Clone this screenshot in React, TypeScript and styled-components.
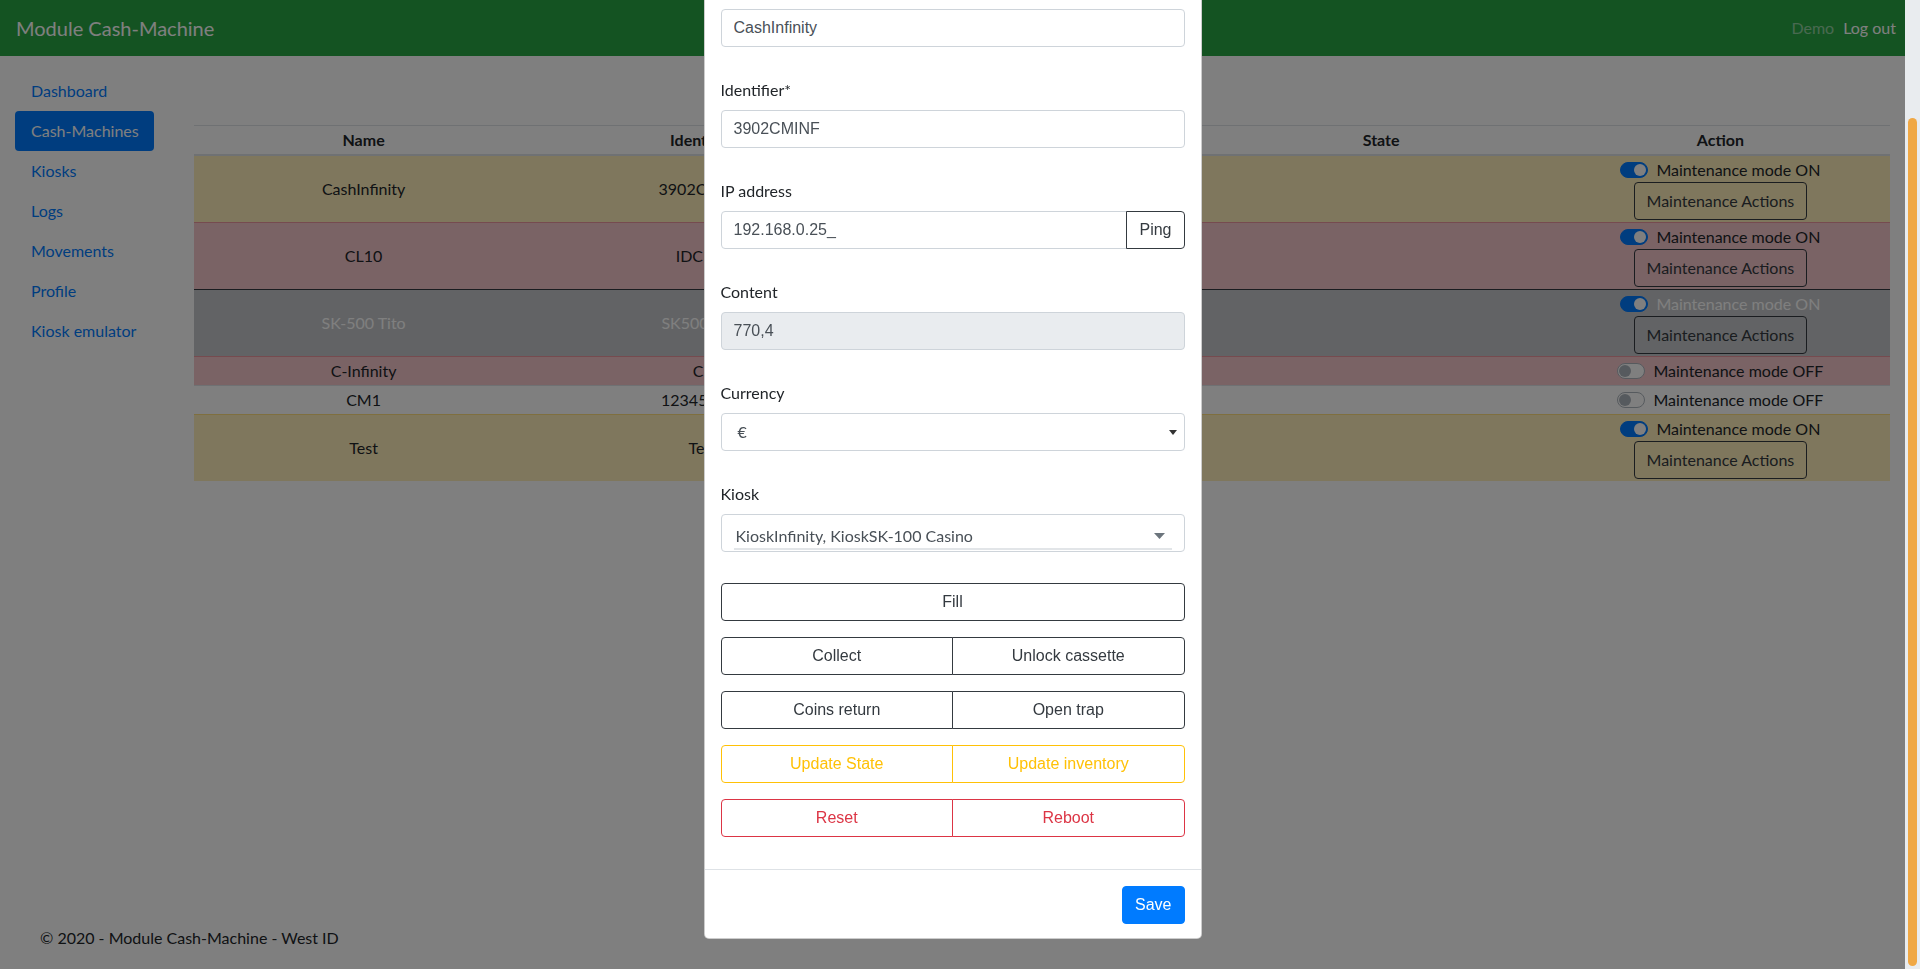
import { useLayoutEffect, useRef, useState } from "react";
import styled, { createGlobalStyle } from "styled-components";

type Tone = "warning" | "danger" | "muted" | "none";
type BtnTone = "dark" | "warning" | "danger";

const tones: Record<Tone, { bg: string; border: string; color: string }> = {
    warning: { bg: "#ffeeba", border: "#ffdf7e", color: "#212529" },
    danger: { bg: "#f5c6cb", border: "#ed969e", color: "#212529" },
    muted: { bg: "#c5c7ca", border: "#343a40", color: "#ffffff" },
    none: { bg: "transparent", border: "#dee2e6", color: "#212529" },
};

const btnColors: Record<BtnTone, string> = {
    dark: "#343a40",
    warning: "#ffc107",
    danger: "#dc3545",
};

const machines = [
    { name: "CashInfinity", id: "3902CMINF", kiosk: "KioskInfinity", tone: "warning" as Tone, on: true },
    { name: "CL10", id: "IDCL10", kiosk: "KioskCL10", tone: "danger" as Tone, on: true },
    { name: "SK-500 Tito", id: "SK500TITO", kiosk: "KioskSK-500", tone: "muted" as Tone, on: true },
    { name: "C-Infinity", id: "C1", kiosk: "", tone: "danger" as Tone, on: false },
    { name: "CM1", id: "123456789", kiosk: "", tone: "none" as Tone, on: false },
    { name: "Test", id: "Test", kiosk: "KioskTest", tone: "warning" as Tone, on: true },
];

const menu = ["Dashboard", "Cash-Machines", "Kiosks", "Logs", "Movements", "Profile", "Kiosk emulator"];

const GlobalStyle = createGlobalStyle`
    * {
        box-sizing: border-box;
    }
    html, body {
        margin: 0;
        height: 100%;
    }
    body {
        overflow: hidden;
        padding-right: 15px;
        font-family: Lato, "Noto Sans", sans-serif;
        font-size: 16px;
        line-height: 1.5;
        color: #212529;
        background: #fff;
    }
`;

export default function App() {
    const layerRef = useRef<HTMLDivElement>(null);
    const [thumb, setThumb] = useState({ top: 118, height: 848 });

    useLayoutEffect(() => {
        const el = layerRef.current;
        if (!el) return;
        el.scrollTop = el.scrollHeight;
        const view = el.clientHeight;
        const total = el.scrollHeight;
        setThumb({
            top: (el.scrollTop / total) * view + 3,
            height: (view / total) * view - 6,
        });
    }, []);

    return (
        <>
            <GlobalStyle />
            <Page>
                <Navbar>
                    <Brand>Module Cash-Machine</Brand>
                    <NavRight>
                        <NavText>Demo</NavText>
                        <NavLink>Log out</NavLink>
                    </NavRight>
                </Navbar>
                <Layout>
                    <SideNav>
                        {menu.map((item) => (
                            <li key={item}>
                                <SideLink $active={item === "Cash-Machines"}>{item}</SideLink>
                            </li>
                        ))}
                    </SideNav>
                    <Main>
                        <Table>
                            <thead>
                                <tr>
                                    <Th>Name</Th>
                                    <Th>Identifier</Th>
                                    <Th>Kiosk</Th>
                                    <Th>State</Th>
                                    <Th>Action</Th>
                                </tr>
                            </thead>
                            <tbody>
                                {machines.map((m) => (
                                    <Row key={m.name} $tone={m.tone}>
                                        <Td $tone={m.tone}>{m.name}</Td>
                                        <Td $tone={m.tone}>{m.id}</Td>
                                        <Td $tone={m.tone}>{m.kiosk}</Td>
                                        <Td $tone={m.tone}></Td>
                                        <Td $tone={m.tone}>
                                            <ActionStack>
                                                <SwitchLabel>
                                                    <SwitchTrack $on={m.on} />
                                                    Maintenance mode {m.on ? "ON" : "OFF"}
                                                </SwitchLabel>
                                                {m.on && <RowButton>Maintenance Actions</RowButton>}
                                            </ActionStack>
                                        </Td>
                                    </Row>
                                ))}
                            </tbody>
                        </Table>
                    </Main>
                </Layout>
                <Footer>© 2020 - Module Cash-Machine - West ID</Footer>
            </Page>

            <ModalLayer ref={layerRef}>
                <Dialog>
                    <ModalHeader>
                        <ModalTitle>Cash-Machine</ModalTitle>
                        <CloseButton>×</CloseButton>
                    </ModalHeader>
                    <ModalBody>
                        <FormGroup>
                            <Label>Name*</Label>
                            <Input defaultValue="CashInfinity" />
                        </FormGroup>
                        <FormGroup>
                            <Label>Identifier*</Label>
                            <Input defaultValue="3902CMINF" />
                        </FormGroup>
                        <FormGroup>
                            <Label>IP address</Label>
                            <InputGroup>
                                <Input defaultValue="192.168.0.25_" $joined />
                                <PingButton>Ping</PingButton>
                            </InputGroup>
                        </FormGroup>
                        <FormGroup>
                            <Label>Content</Label>
                            <Input defaultValue="770,4" disabled />
                        </FormGroup>
                        <FormGroup>
                            <Label>Currency</Label>
                            <SelectBox>
                                <span>€</span>
                                <svg width="8" height="5" viewBox="0 0 8 5">
                                    <path d="M0 0h8L4 5z" fill="#333" />
                                </svg>
                            </SelectBox>
                        </FormGroup>
                        <FormGroup>
                            <Label>Kiosk</Label>
                            <KioskBox>
                                <KioskValue>
                                    <span>KioskInfinity, KioskSK-100 Casino</span>
                                    <svg width="11" height="6" viewBox="0 0 11 6">
                                        <path d="M0 0h11L5.5 6z" fill="#6c757d" />
                                    </svg>
                                </KioskValue>
                            </KioskBox>
                        </FormGroup>

                        <ButtonRow>
                            <OutlineButton $tone="dark">Fill</OutlineButton>
                        </ButtonRow>
                        <ButtonRow>
                            <OutlineButton $tone="dark">Collect</OutlineButton>
                            <OutlineButton $tone="dark">Unlock cassette</OutlineButton>
                        </ButtonRow>
                        <ButtonRow>
                            <OutlineButton $tone="dark">Coins return</OutlineButton>
                            <OutlineButton $tone="dark">Open trap</OutlineButton>
                        </ButtonRow>
                        <ButtonRow>
                            <OutlineButton $tone="warning">Update State</OutlineButton>
                            <OutlineButton $tone="warning">Update inventory</OutlineButton>
                        </ButtonRow>
                        <ButtonRow>
                            <OutlineButton $tone="danger">Reset</OutlineButton>
                            <OutlineButton $tone="danger">Reboot</OutlineButton>
                        </ButtonRow>
                    </ModalBody>
                    <ModalFooter>
                        <SaveButton>Save</SaveButton>
                    </ModalFooter>
                </Dialog>
            </ModalLayer>
            <ScrollTrack>
                <ScrollThumb style={{ top: thumb.top, height: thumb.height }} />
            </ScrollTrack>
        </>
    );
}

const Page = styled.div`
    height: 100vh;
    display: flex;
    flex-direction: column;
`;

const Navbar = styled.nav`
    height: 56px;
    flex-shrink: 0;
    display: flex;
    align-items: center;
    padding: 0 1px 0 16px;
    background: #28a745;
`;

const Brand = styled.span`
    font-size: 20px;
    line-height: 30px;
    color: #fff;
`;

const NavRight = styled.div`
    margin-left: auto;
    display: flex;
    align-items: center;
`;

const NavText = styled.span`
    color: rgba(255, 255, 255, 0.5);
`;

const NavLink = styled.a`
    padding: 0 8px 0 9px;
    color: #fff;
    text-decoration: none;
`;

const Layout = styled.div`
    flex: 1;
    display: grid;
    grid-template-columns: 139px 1fr;
    column-gap: 40px;
    align-items: start;
    padding: 15px 15px 0;
`;

const SideNav = styled.ul`
    list-style: none;
    margin: 0;
    padding: 0;
`;

const SideLink = styled.a<{ $active?: boolean }>`
    display: block;
    padding: 8px 16px;
    border-radius: 4px;
    line-height: 24px;
    white-space: nowrap;
    text-decoration: none;
    color: ${(p) => (p.$active ? "#fff" : "#007bff")};
    background: ${(p) => (p.$active ? "#007bff" : "transparent")};
`;

const Main = styled.main`
    padding-top: 54px;
`;

const Table = styled.table`
    width: 100%;
    border-collapse: collapse;
    table-layout: fixed;
    text-align: center;
`;

const Th = styled.th`
    padding: 2px 4px;
    line-height: 24px;
    font-weight: 700;
    border-top: 1px solid #dee2e6;
    border-bottom: 2px solid #dee2e6;
`;

const Row = styled.tr<{ $tone: Tone }>`
    background: ${(p) => tones[p.$tone].bg};
    color: ${(p) => tones[p.$tone].color};
`;

const Td = styled.td<{ $tone: Tone }>`
    padding: 2px 4px;
    line-height: 24px;
    vertical-align: middle;
    white-space: nowrap;
    border-top: 1px solid ${(p) => tones[p.$tone].border};
`;

const ActionStack = styled.div`
    display: flex;
    flex-direction: column;
    align-items: center;
`;

const SwitchLabel = styled.label`
    display: inline-flex;
    align-items: center;
    gap: 8px;
    line-height: 24px;
`;

const SwitchTrack = styled.span<{ $on: boolean }>`
    position: relative;
    width: 28px;
    height: 16px;
    border-radius: 8px;
    border: 1px solid ${(p) => (p.$on ? "#007bff" : "#adb5bd")};
    background: ${(p) => (p.$on ? "#007bff" : "#fff")};
    &::after {
        content: "";
        position: absolute;
        top: 1px;
        left: ${(p) => (p.$on ? "13px" : "1px")};
        width: 12px;
        height: 12px;
        border-radius: 50%;
        background: ${(p) => (p.$on ? "#fff" : "#adb5bd")};
    }
`;

const RowButton = styled.button`
    height: 38px;
    padding: 6px 12px;
    font-family: inherit;
    font-size: 16px;
    line-height: 24px;
    color: #343a40;
    background: transparent;
    border: 1px solid #343a40;
    border-radius: 4px;
`;

const Footer = styled.footer`
    height: 57px;
    flex-shrink: 0;
    padding-left: 40px;
    line-height: 51px;
    white-space: nowrap;
`;

const ModalLayer = styled.div`
    position: fixed;
    inset: 0;
    z-index: 10;
    overflow: hidden;
    padding-right: 15px;
    background: rgba(0, 0, 0, 0.5);
`;

const ScrollTrack = styled.div`
    position: fixed;
    top: 0;
    right: 0;
    bottom: 0;
    z-index: 11;
    width: 15px;
    background: #e9ecef;
`;

const ScrollThumb = styled.div`
    position: absolute;
    left: 3px;
    right: 3px;
    border-radius: 5px;
    background: #f0a845;
`;

const Dialog = styled.div`
    width: 498px;
    margin: 28px auto 30px;
    background: #fff;
    border: 1px solid rgba(0, 0, 0, 0.2);
    border-radius: 5px;
`;

const ModalHeader = styled.div`
    display: flex;
    align-items: center;
    justify-content: space-between;
    padding: 16px;
    border-bottom: 1px solid #dee2e6;
`;

const ModalTitle = styled.h5`
    margin: 0;
    font-size: 20px;
    font-weight: 500;
    line-height: 30px;
`;

const CloseButton = styled.button`
    border: 0;
    background: transparent;
    font-size: 24px;
    font-weight: 700;
    line-height: 1;
    color: #000;
    opacity: 0.5;
`;

const ModalBody = styled.div`
    padding: 16px;
`;

const FormGroup = styled.div`
    margin-bottom: 31px;
`;

const Label = styled.label`
    display: block;
    margin-bottom: 8px;
    line-height: 24px;
`;

const Input = styled.input<{ $joined?: boolean }>`
    display: block;
    width: 100%;
    height: 38px;
    padding: 6px 12px;
    font-family: "Liberation Sans", Arial, sans-serif;
    font-size: 16px;
    line-height: 24px;
    color: #495057;
    background: #fff;
    border: 1px solid #ced4da;
    border-radius: ${(p) => (p.$joined ? "4px 0 0 4px" : "4px")};
    &:disabled {
        background: #e9ecef;
    }
`;

const InputGroup = styled.div`
    display: flex;
    > input {
        flex: 1;
    }
`;

const PingButton = styled.button`
    height: 38px;
    margin-left: -1px;
    padding: 6px 12px;
    font-family: "Liberation Sans", Arial, sans-serif;
    font-size: 16px;
    line-height: 24px;
    color: #343a40;
    background: #fff;
    border: 1px solid #343a40;
    border-radius: 0 4px 4px 0;
`;

const SelectBox = styled.div`
    display: flex;
    align-items: center;
    justify-content: space-between;
    height: 38px;
    padding: 0 7px 0 16px;
    color: #495057;
    border: 1px solid #ced4da;
    border-radius: 4px;
`;

const KioskBox = styled.div`
    display: flex;
    align-items: flex-end;
    height: 38px;
    padding: 0 12px 1px;
    border: 1px solid #ced4da;
    border-radius: 4px;
`;

const KioskValue = styled.div`
    flex: 1;
    display: flex;
    align-items: center;
    justify-content: space-between;
    height: 26px;
    padding: 0 7px 0 2px;
    color: #495057;
    border-bottom: 2px solid #e2e5e8;
`;

const ButtonRow = styled.div`
    display: flex;
    margin-bottom: 16px;
`;

const OutlineButton = styled.button<{ $tone: BtnTone }>`
    flex: 1;
    height: 38px;
    padding: 6px 12px;
    font-family: "Liberation Sans", Arial, sans-serif;
    font-size: 16px;
    line-height: 24px;
    color: ${(p) => btnColors[p.$tone]};
    background: #fff;
    border: 1px solid ${(p) => btnColors[p.$tone]};
    border-radius: 4px;
    &:first-child:not(:last-child) {
        border-radius: 4px 0 0 4px;
    }
    & + & {
        margin-left: -1px;
        border-radius: 0 4px 4px 0;
    }
`;

const ModalFooter = styled.div`
    display: flex;
    justify-content: flex-end;
    padding: 12px 12px 10px;
    border-top: 1px solid #dee2e6;
`;

const SaveButton = styled.button`
    height: 38px;
    margin: 4px;
    padding: 6px 12px;
    font-family: "Liberation Sans", Arial, sans-serif;
    font-size: 16px;
    line-height: 24px;
    color: #fff;
    background: #007bff;
    border: 1px solid #007bff;
    border-radius: 4px;
`;
